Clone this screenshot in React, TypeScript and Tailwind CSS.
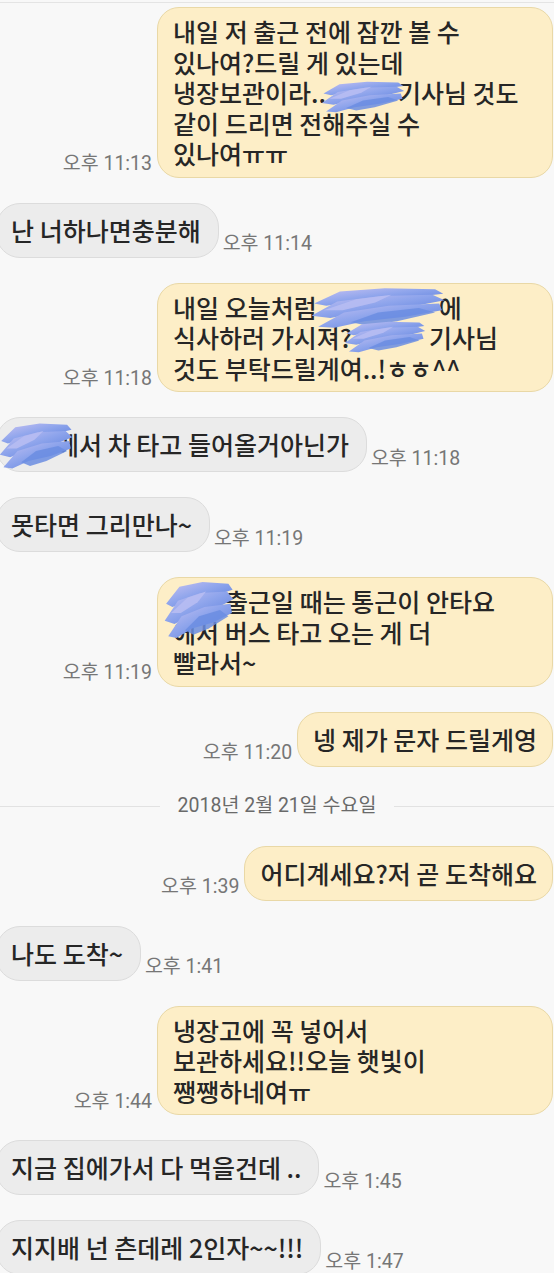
import React from "react";

const BODY = "font-['Noto_Sans_CJK_KR','Noto_Sans',sans-serif]";
const TIME = "font-['Roboto','Noto_Sans_CJK_KR',sans-serif]";

function Scribble({ id, className }: { id: string; className: string }) {
  return (
    <svg
      viewBox="0 0 100 40"
      preserveAspectRatio="none"
      className={"absolute pointer-events-none " + className}
    >
      <defs>
        <linearGradient id={id} x1="0" y1="0" x2="1" y2="1">
          <stop offset="0" stopColor="#c9c3f3" />
          <stop offset="0.45" stopColor="#8fa5ec" />
          <stop offset="1" stopColor="#557bdb" />
        </linearGradient>
      </defs>
      <path d="M3 16 L22 5 L55 2 L92 3 L98 7 L70 11 L40 13 L12 18 Z" fill={`url(#${id})`} />
      <path d="M1 27 L20 14 L52 9 L90 8 L99 13 L78 18 L45 22 L15 29 Z" fill={`url(#${id})`} />
      <path d="M6 37 L25 24 L58 18 L95 16 L97 22 L70 28 L40 32 L18 38 Z" fill={`url(#${id})`} />
      <path d="M30 33 L50 24 L80 20 L92 24 L64 32 L42 36 Z" fill="#6b8de2" opacity="0.85" />
      <path d="M10 22 L34 12 L60 8 L48 15 L24 22 Z" fill="#b7bdf2" opacity="0.9" />
    </svg>
  );
}

function Time({ t }: { t: string }) {
  return (
    <span className={`${TIME} text-[19.5px] leading-none text-[#767676] whitespace-nowrap mb-[4px] shrink-0`}>
      {t}
    </span>
  );
}

const sentBubble =
  "relative rounded-[22px] border border-[#e9d8a6] bg-[#fdeec7] px-[15px] py-[8px] min-h-[55px] flex flex-col justify-center text-[25px] font-medium leading-[30.5px] text-[#262626] whitespace-nowrap";
const recvBubble =
  "relative rounded-[24px] border border-[#dcdcdc] bg-[#ececec] pl-[14px] pr-[17px] py-[8px] min-h-[55px] flex flex-col justify-center text-[25px] font-medium leading-[30.5px] text-[#262626] whitespace-nowrap";

function Sent({ time, children, wide }: { time: string; children: React.ReactNode; wide?: boolean }) {
  return (
    <div className="flex justify-end items-end gap-[5px] pr-px">
      <Time t={time} />
      <div className={sentBubble + (wide ? " w-[396px]" : "")}>{children}</div>
    </div>
  );
}

function Recv({ time, children }: { time: string; children: React.ReactNode }) {
  return (
    <div className="flex items-end gap-[4px] -ml-[4px]">
      <div className={recvBubble}>{children}</div>
      <Time t={time} />
    </div>
  );
}

export default function App() {
  return (
    <div className={`${BODY} w-[554px] min-h-[1273px] bg-[#f8f8f8] overflow-hidden`}>
      <div className="h-[2px]" />
      <div className="h-px bg-[#e4e4e4]" />
      <div className="flex flex-col gap-[25px] pt-[4px]">
        <Sent time="오후 11:13" wide>
          <div>내일 저 출근 전에 잠깐 볼 수</div>
          <div>있나여?드릴 게 있는데</div>
          <div>
            냉장보관이라..<span className="inline-block w-[72px]" />기사님 것도
          </div>
          <div>같이 드리면 전해주실 수</div>
          <div>있나여ㅠㅠ</div>
          <Scribble id="s1" className="left-[163px] top-[72px] w-[84px] h-[34px]" />
        </Sent>

        <Recv time="오후 11:14">
          <div>난 너하나면충분해</div>
        </Recv>

        <Sent time="오후 11:18" wide>
          <div>
            내일 오늘처럼<span className="inline-block w-[122px]" />에
          </div>
          <div>
            식사하러 가시져?<span className="inline-block w-[77px]" />기사님
          </div>
          <div>것도 부탁드릴게여..!ㅎㅎ^^</div>
          <Scribble id="s2" className="left-[152px] top-[2px] w-[136px] h-[44px]" />
          <Scribble id="s3" className="left-[186px] top-[36px] w-[82px] h-[34px]" />
        </Sent>

        <Recv time="오후 11:18">
          <div>
            <span className="inline-block w-[45px]" />에서 차 타고 들어올거아닌가
          </div>
          <Scribble id="s4" className="left-[2px] top-[3px] w-[74px] h-[50px]" />
        </Recv>

        <Recv time="오후 11:19">
          <div>못타면 그리만나~</div>
        </Recv>

        <Sent time="오후 11:19" wide>
          <div>
            <span className="inline-block w-[52px]" />출근일 때는 통근이 안타요
          </div>
          <div>에서 버스 타고 오는 게 더</div>
          <div>빨라서~</div>
          <Scribble id="s5" className="left-[6px] top-[1px] w-[70px] h-[62px]" />
        </Sent>

        <Sent time="오후 11:20">
          <div>넹 제가 문자 드릴게영</div>
        </Sent>

        <div className="flex items-center h-[29px]">
          <div className="flex-1 h-px bg-[#e2e2e2]" />
          <span className={`${TIME} px-[18px] text-[19.5px] leading-none text-[#6a6a6a] whitespace-nowrap`}>
            2018년 2월 21일 수요일
          </span>
          <div className="flex-1 h-px bg-[#e2e2e2]" />
        </div>

        <Sent time="오후 1:39">
          <div>어디계세요?저 곧 도착해요</div>
        </Sent>

        <Recv time="오후 1:41">
          <div>나도 도착~</div>
        </Recv>

        <Sent time="오후 1:44" wide>
          <div>냉장고에 꼭 넣어서</div>
          <div>보관하세요!!오늘 햇빛이</div>
          <div>쨍쨍하네여ㅠ</div>
        </Sent>

        <Recv time="오후 1:45">
          <div>지금 집에가서 다 먹을건데 ..</div>
        </Recv>

        <Recv time="오후 1:47">
          <div>지지배 넌 츤데레 2인자~~!!!</div>
        </Recv>
      </div>
    </div>
  );
}
